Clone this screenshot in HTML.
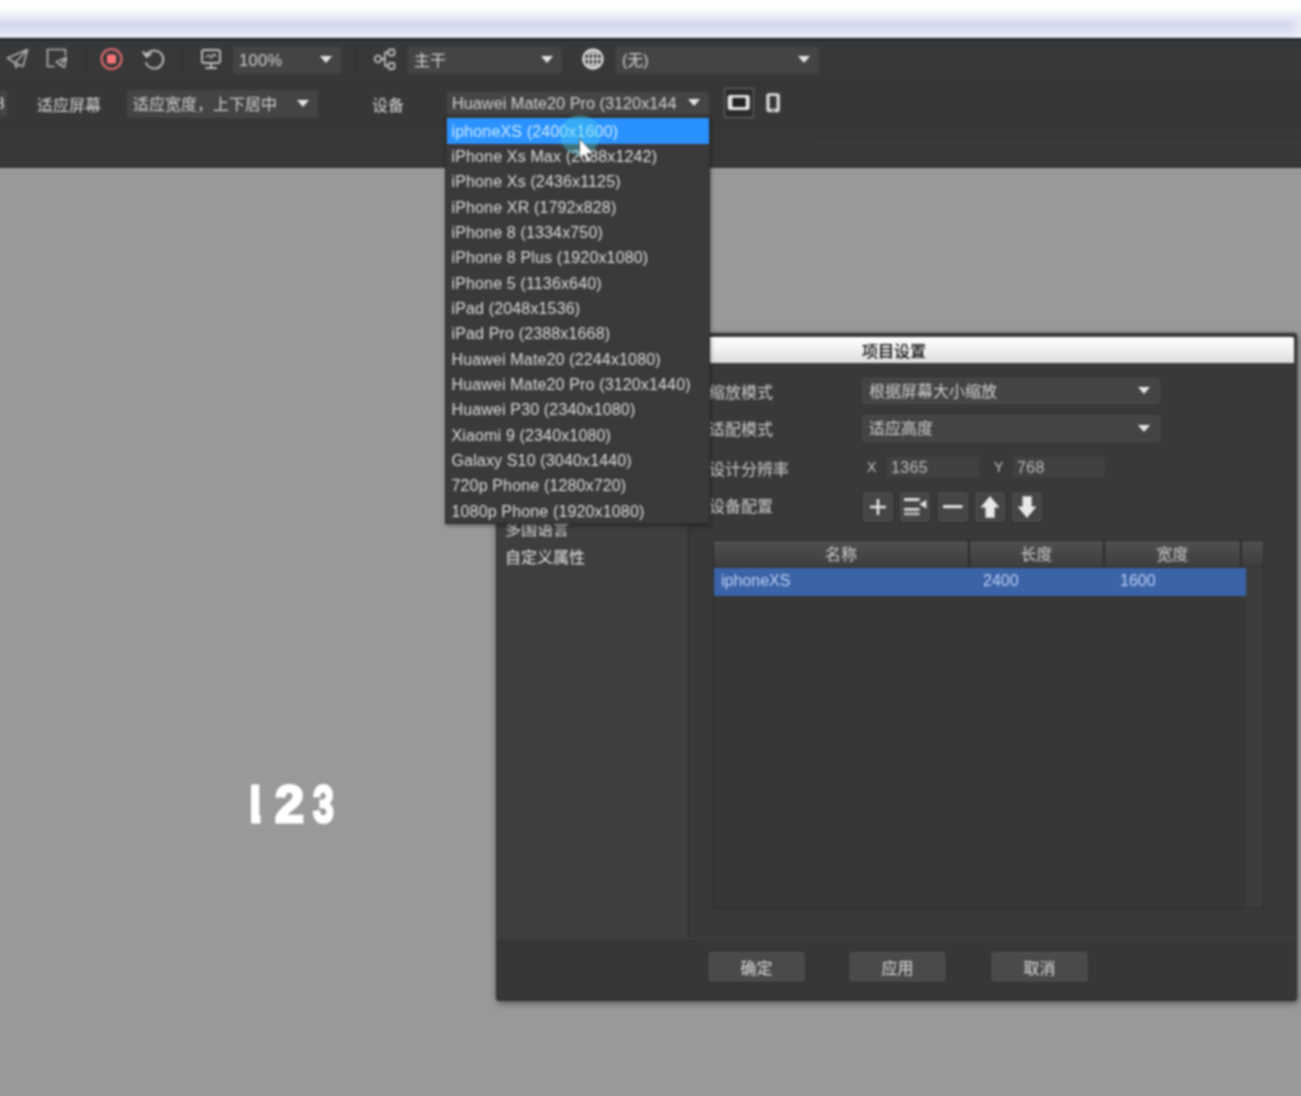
<!DOCTYPE html>
<html lang="zh">
<head>
<meta charset="utf-8">
<title>项目设置</title>
<style>
*{box-sizing:border-box;margin:0;padding:0}
html,body{width:1301px;height:1096px;overflow:hidden;background:#999}
body{position:relative;font-family:"Liberation Sans","Noto Sans CJK SC",sans-serif;font-size:16px;color:#d6d6d6}
#w{position:absolute;left:-10px;top:-10px;width:1321px;height:1116px;background:#999;filter:blur(1px)}
#in{position:absolute;left:10px;top:10px;width:1301px;height:1096px}
.abs{position:absolute}
#topbar{left:-10px;top:-10px;width:1321px;height:48px;background:linear-gradient(#fff 0,#fff 37%,#f3f5fb 48%,#e2e5f3 60%,#d5d8ec 71%,#dce0f2 85%,#e6e9f7 96%,#e6e9f7 100%)}
#tb1{left:-10px;top:38px;width:1321px;height:44px;background:linear-gradient(#36393b,#383838 60%);border-top:2px solid #181b20}
#tb2{left:-10px;top:82px;width:1321px;height:43px;background:#373737;border-top:1px solid #2e2e2e}
#tb3{left:-10px;top:125px;width:1321px;height:43px;background:#383838;border-top:1px solid #2e2e2e}
.combo{position:absolute;background:#444;border-radius:3px;color:#d2d2d2;white-space:nowrap;overflow:hidden;padding-left:6px}
.combo:after{content:"";position:absolute;right:9px;top:50%;margin-top:-4px;border:6.5px solid transparent;border-top:7px solid #e6e6e6;border-bottom:0}
.lbl{position:absolute;white-space:nowrap;color:#d8d8d8}

#dlg{left:496px;top:333px;width:801px;height:668px;background:#393939;box-shadow:1px 2px 7px rgba(0,0,0,.45);border:1px solid #2b2b2b;border-radius:3px}
#dlgtitle{left:498px;top:337px;width:796px;height:26px;background:linear-gradient(#fdfdfd,#f4f4f4 40%,#dcdcdc);color:#0a0a0a;font-size:16px;line-height:29px;border-radius:2px 2px 0 0;text-shadow:0 0 .6px #000}
#leftp{left:497px;top:364px;width:193px;height:574px;background:#3d3e3e;border-right:2px solid #303030}
#foot{left:497px;top:938px;width:799px;height:62px;background:#373737;border-top:1px solid #444}
.btn{position:absolute;top:951px;height:32px;width:99px;background:#4a4a4a;border:1px solid #2f2f2f;border-radius:4px;color:#ddd;font-size:16px;line-height:34px;text-align:center;box-shadow:inset 0 1px 0 #575757}
.row{position:absolute;left:709px;font-size:16px;line-height:24px;color:#cecece;white-space:nowrap}
.inp{position:absolute;top:456px;height:22px;background:#414141;border:1px solid #3c3c3c;color:#bcbcbc;font-size:16px;line-height:21px;padding-left:4px;border-radius:2px;letter-spacing:.35px}
.ib{position:absolute;top:492px;width:30px;height:30px;background:#454545;border:1px solid #535353;border-radius:2px;box-shadow:0 0 0 1px #2f2f2f}
.ib svg{position:absolute;left:0;top:0}
#tbl{left:713px;top:540px;width:551px;height:369px;background:#373737;border:1px solid #2c2c2c}
.th{position:absolute;top:541px;height:24.5px;background:linear-gradient(#505050,#3e3e3e);border-right:2px solid #2b2b2b;color:#cfcfcf;font-size:16px;line-height:28px;text-align:center}
#selrow{left:714px;top:568px;width:532px;height:28px;background:#3b63a8;color:#bcd0f2;font-size:16px;line-height:25px}
#selrow span{position:absolute;top:0}
#dd{left:444.5px;top:116px;width:265px;height:408px;background:#3a3a3a;border:1px solid #2d2d2d;box-shadow:1px 2px 4px rgba(0,0,0,.35)}
#dd div{position:absolute;left:1px;width:262px;height:25px;line-height:23px;padding-left:5px;font-size:16px;letter-spacing:.15px;color:#dedede;white-space:nowrap}
#dd div.sel{background:#2a92ff;color:#cdeaff;height:26.3px;line-height:28px;padding-left:5px}
</style>
</head>
<body>
<div id="w"><div id="in">
<div id="topbar" class="abs"></div>
<div id="tb1" class="abs"></div>
<div id="tb2" class="abs"></div>
<div id="tb3" class="abs"></div>
<div class="abs" style="left:1288px;top:18px;width:24px;height:20px;background:linear-gradient(90deg,rgba(255,255,255,0),rgba(255,255,255,.75))"></div>
<div class="abs" style="left:815px;top:142px;width:500px;height:1px;background:rgba(255,255,255,.035)"></div>
<!-- toolbar row 1 -->
<svg class="abs" style="left:0;top:38px" width="830" height="44" viewBox="0 0 830 44" fill="none" stroke="#bebebe" stroke-width="1.9" stroke-linejoin="round" stroke-linecap="round">
  <!-- paper plane -->
  <path d="M7.500 20 L27.500 11.500 L23 28.500 L15 25 Z M15 25 L26.500 12.500 M15 25 L16 29.500 L19 27" stroke="#b0b0b0" stroke-width="1.600"/>
  <!-- doc + plane -->
  <path d="M65.500 17 V11.500 H47.500 V28.500 H54" stroke="#b0b0b0" stroke-width="1.700"/>
  <path d="M56 24 L66.500 19.500 L64.500 29.500 L60 27 Z M60 27 L65.500 20.500" stroke="#b0b0b0" stroke-width="1.500"/>
  <!-- separators -->
  <path d="M86 8 V35" stroke="#2f2f2f" stroke-width="1.5"/>
  <path d="M182 8 V35" stroke="#2f2f2f" stroke-width="1.5"/>
  <path d="M356 8 V35" stroke="#313131" stroke-width="1.5"/>
  <!-- record -->
  <circle cx="111.5" cy="21" r="10" stroke="#e0696c" stroke-width="2.2"/>
  <rect x="107" y="16.5" width="9" height="9" rx="1.5" fill="#ff7478" stroke="none"/>
  <!-- refresh -->
  <path d="M146.5 17 A9 9 0 1 1 146 25" />
  <path d="M143 14 L146.5 19 L151 16" stroke-width="1.8" fill="#bebebe"/>
  <!-- monitor -->
  <rect x="202" y="12" width="18" height="13" rx="2"/>
  <path d="M211 25 V29 M206 30 H216"/>
  <path d="M206 19 L209 17 L211 20 L214 16 L216 18" stroke-width="1.3"/>
  <!-- branch icon -->
  <circle cx="378" cy="21" r="3.3" stroke-width="1.8"/>
  <rect x="388.5" y="11.5" width="6" height="6" rx="1.5" stroke-width="1.8"/>
  <rect x="388.5" y="25" width="6" height="6" rx="1.5" stroke-width="1.8"/>
  <path d="M381.5 21 H385 M388 14.5 H385 V28 H388" stroke-width="1.8"/>
  <!-- globe -->
  <circle cx="593" cy="21" r="9.5" stroke="#e6e6e6" stroke-width="2.2"/>
  <path d="M583.5 21 H602.5 M593 11.5 V30.5" stroke="#e6e6e6" stroke-width="1.7"/><path d="M585.5 15.500 H600.5 M585.5 26.500 H600.5" stroke="#e6e6e6" stroke-width="1.2"/>
  <ellipse cx="593" cy="21" rx="4.6" ry="9.5" stroke="#e6e6e6" stroke-width="1.5"/>
</svg>
<div class="combo" style="left:233px;top:46.500px;width:108px;height:27px;line-height:27px;font-size:16.500px;letter-spacing:.3px">100%</div>
<div class="combo" style="left:408px;top:46.500px;width:154px;height:27px;line-height:28px;font-size:16px">主干</div>
<div class="combo" style="left:616px;top:46.500px;width:203px;height:27px;line-height:28px;font-size:16px">(无)</div>

<!-- toolbar row 2 -->
<div class="abs" style="left:0;top:90px;width:7px;height:27px;background:#444;border-radius:0 3px 3px 0;color:#ddd;font-size:17px;line-height:27px;overflow:hidden;text-indent:-5px">8</div>
<div class="lbl" style="left:37px;top:94px;font-size:16px;line-height:24px">适应屏幕</div>
<div class="combo" style="left:127px;top:90px;width:191px;height:27.500px;line-height:29px;font-size:16px">适应宽度，上下居中</div>
<div class="lbl" style="left:372px;top:94px;font-size:16px;line-height:24px">设备</div>
<div class="combo" style="left:447px;top:91.5px;width:261.5px;height:23px;line-height:23px;font-size:16.3px;padding-left:5px;border-radius:2px">Huawei Mate20 Pro (3120x144</div>
<svg class="abs" style="left:720px;top:84px" width="70" height="40" viewBox="0 0 70 40" fill="none">
  <rect x="4.700" y="4.500" width="28.600" height="29" fill="#2b2b2b" stroke="#707070" stroke-width="1"/>
  <rect x="7.700" y="11" width="22" height="15" rx="2.500" fill="#e4e4e4"/>
  <rect x="12.300" y="13.800" width="13.500" height="9.300" rx=".8" fill="#222"/>
  <rect x="46.400" y="9.200" width="13.400" height="19" rx="2.600" fill="#dcdcdc"/>
  <rect x="49.600" y="12" width="7" height="12.800" rx=".6" fill="#363636"/>
  <rect x="51.800" y="26" width="2.600" height="1.600" fill="#555"/>
</svg>


<!-- canvas text -->
<div id="num" class="abs" style="left:240px;top:770px;width:110px;height:70px;font-size:52px;line-height:56px;font-weight:bold;color:#fff;-webkit-text-stroke:3px #fff"><span id="n1" style="position:absolute;left:-1.5px;top:6px;clip-path:inset(0 7px 0 12.5px)">1</span><span id="n2" style="position:absolute;left:35px;top:6px">2</span><span id="n3" style="position:absolute;left:73px;top:6px;transform:scaleX(.72);transform-origin:0 0">3</span></div>

<!-- dialog -->
<div id="dlg" class="abs"></div>
<div id="dlgtitle" class="abs"><span class="abs" style="left:364px;top:0">项目设置</span></div>
<div id="leftp" class="abs"></div>
<div class="lbl" style="left:505px;top:518px;font-size:16px;line-height:24px;color:#ddd">多国语言</div>
<div class="lbl" style="left:505px;top:546px;font-size:16px;line-height:24px;color:#e4e4e4">自定义属性</div>
<div class="row" style="top:381px">缩放模式</div>
<div class="combo" style="left:862px;top:378px;width:298px;height:26px;line-height:26px;font-size:16px;border:1px solid #4b4b4b">根据屏幕大小缩放</div>
<div class="row" style="top:418px">适配模式</div>
<div class="combo" style="left:862px;top:415px;width:298px;height:27px;line-height:26px;font-size:16px;border:1px solid #4b4b4b">适应高度</div>
<div class="row" style="top:458px">设计分辨率</div>
<div class="lbl" style="left:867px;top:456px;font-size:14px;line-height:22px;color:#c8c8c8">X</div>
<div class="inp" style="left:886px;width:94px">1365</div>
<div class="lbl" style="left:994px;top:456px;font-size:14px;line-height:22px;color:#c8c8c8">Y</div>
<div class="inp" style="left:1012px;width:93px">768</div>
<div class="row" style="top:495px">设备配置</div>
<div class="ib" style="left:862.500px"><svg width="28" height="28" viewBox="0 0 28 28"><path d="M14 6V22M6 14H22" stroke="#e6e6e6" stroke-width="2.600"/></svg></div>
<div class="ib" style="left:900px"><svg width="28" height="28" viewBox="0 0 28 28"><path d="M3 6.600H18.600" stroke="#e0e0e0" stroke-width="3"/><path d="M3 16.300H18.600" stroke="#e6e6e6" stroke-width="2.500"/><path d="M3 20.900H18.600" stroke="#b4b4b4" stroke-width="3"/><path d="M18.400 11.200L25.300 7V15.400Z" fill="#e6e6e6"/></svg></div>
<div class="ib" style="left:937.500px"><svg width="28" height="28" viewBox="0 0 28 28"><path d="M4 13.600H23.500" stroke="#e6e6e6" stroke-width="3"/></svg></div>
<div class="ib" style="left:974.500px"><svg width="28" height="28" viewBox="0 0 28 28"><path d="M14 3L23.500 14.600H18.700V24.800H9.500V14.600H4.500Z" fill="#e8e8e8"/></svg></div>
<div class="ib" style="left:1012px"><svg width="28" height="28" viewBox="0 0 28 28"><path d="M14 25L23.500 13.400H18.700V3.200H9.500V13.400H4.500Z" fill="#e8e8e8"/></svg></div>
<div id="tbl" class="abs"></div>
<div class="abs" style="left:1246px;top:568px;width:17px;height:340px;background:#3d3d3d"></div>
<div class="th" style="left:714px;width:256px">名称</div>
<div class="th" style="left:970px;width:135px">长度</div>
<div class="th" style="left:1105px;width:137px">宽度</div>
<div class="th" style="left:1242px;width:21px;border-right:0"></div>
<div id="selrow" class="abs"><span style="left:7px">iphoneXS</span><span style="left:269px">2400</span><span style="left:406px">1600</span></div>
<div id="foot" class="abs"></div>
<div class="btn" style="left:707px">确定</div>
<div class="btn" style="left:848px">应用</div>
<div class="btn" style="left:990px">取消</div>

<!-- dropdown -->
<div id="dd" class="abs">
<div class="sel" style="top:.5px">iphoneXS (2400x1600)</div>
<div style="top:28px">iPhone Xs Max (2688x1242)</div>
<div style="top:53px">iPhone Xs (2436x1125)</div>
<div style="top:79px">iPhone XR (1792x828)</div>
<div style="top:104px">iPhone 8 (1334x750)</div>
<div style="top:129px">iPhone 8 Plus (1920x1080)</div>
<div style="top:155px">iPhone 5 (1136x640)</div>
<div style="top:180px">iPad (2048x1536)</div>
<div style="top:205px">iPad Pro (2388x1668)</div>
<div style="top:231px">Huawei Mate20 (2244x1080)</div>
<div style="top:256px">Huawei Mate20 Pro (3120x1440)</div>
<div style="top:281px">Huawei P30 (2340x1080)</div>
<div style="top:307px">Xiaomi 9 (2340x1080)</div>
<div style="top:332px">Galaxy S10 (3040x1440)</div>
<div style="top:357px">720p Phone (1280x720)</div>
<div style="top:383px">1080p Phone (1920x1080)</div>
</div>

<!-- cursor highlight + pointer -->
<div class="abs" style="left:560px;top:115px;width:40px;height:40px;border-radius:50%;background:rgba(70,210,235,.38)"></div>
<svg class="abs" style="left:577px;top:136px" width="22" height="30" viewBox="0 0 22 30"><path d="M2.500 2.500V22.500L7 18.500L10.500 26.500L13.500 25L10 17.500H16.500Z" fill="#fff" stroke="#3a3a3a" stroke-width=".8"/></svg>
</div></div>
</body>
</html>
